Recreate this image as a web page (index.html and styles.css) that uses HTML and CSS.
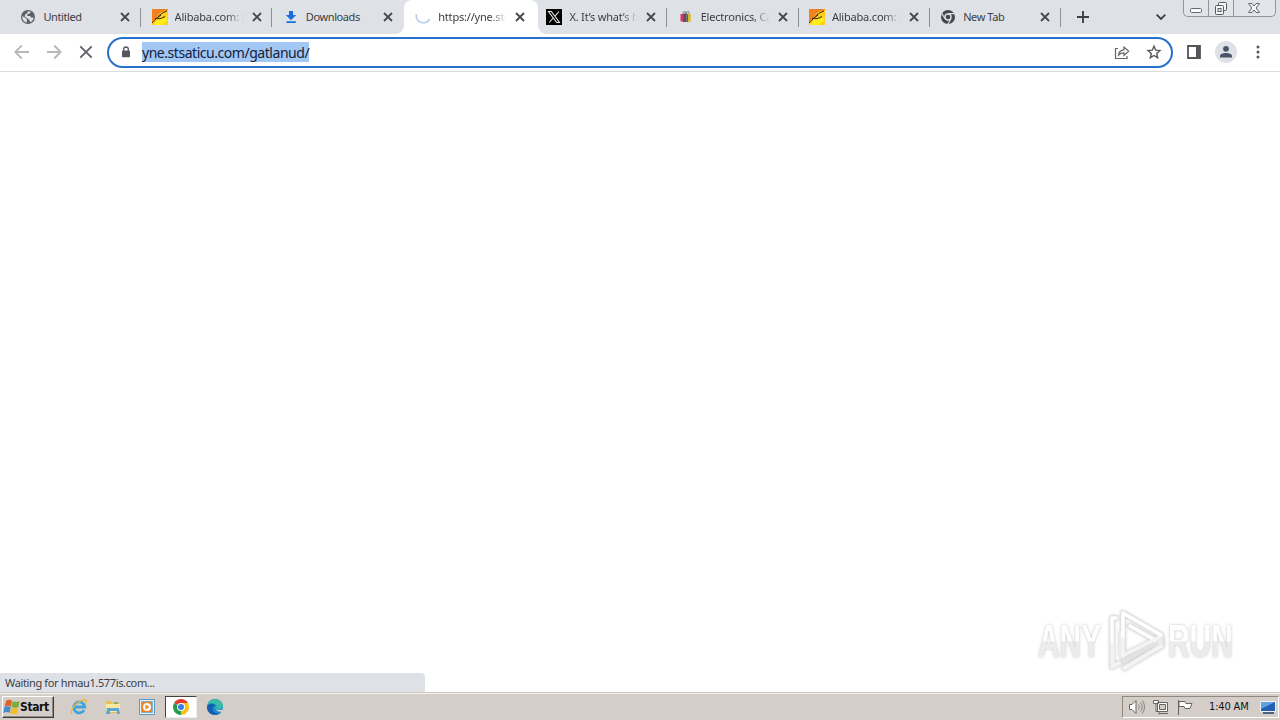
FILE: index.html
```html
<!DOCTYPE html>
<html lang="en">
<head>
<meta charset="utf-8">
<title>Browser</title>
<link rel="stylesheet" href="styles.css">
</head>
<body>
<svg class="defs" width="0" height="0">
  <symbol id="close" viewBox="0 0 10 10"><path d="M1 1l8 8M9 1L1 9" stroke="#45494d" stroke-width="1.8" fill="none"/></symbol>
  <symbol id="alibaba" viewBox="0 0 16 16"><path fill="#ffcf1c" d="M0 0h16v16H0z"/><path fill="#f58220" d="M0 0h16v1C10 2 7 4 4 9L0 14z"/><path fill="#ffee18" d="M4 12l4-2 7-1v3l-6 4H2z"/><path d="M0 14C4 11 6 5 15 2M3 9.500q3-.5 4 .3 2 0 6-2.300M5 9l4-3" fill="none" stroke="#35240b" stroke-width="1"/></symbol>
</svg>
<div class="desktop">
  <header class="tabstrip">
    <div class="tabs">
      <div class="tab"><svg class="fav" viewBox="0 0 16 16"><circle cx="8" cy="8" r="7" fill="#5c6066"/><path fill="#dee1e6" d="M2.300 7l3.200 2 1.300 1v3.700C4 13 2 10.500 2.300 7zM8 2.200l2.800.6-.7 1.500-2.400.8L7 7l3 .1 1.500 1.600 2.200-.2c-.2 2-1.600 4-3.200 4.700L9.300 11 7 9 4.800 7.800 5 5.500 7 4.600z"/></svg><span class="title">Untitled</span><svg class="x"><use href="#close"/></svg></div>
      <div class="tab"><svg class="fav"><use href="#alibaba"/></svg><span class="title fade">Alibaba.com: M</span><svg class="x"><use href="#close"/></svg></div>
      <div class="tab before"><svg class="fav" viewBox="0 0 16 16"><path fill="#1a6fe0" d="M6 2h4v4h3.200L8 11.200 2.800 6H6zM3.500 12.200h9.300V14H3.500z"/></svg><span class="title">Downloads</span><svg class="x"><use href="#close"/></svg></div>
      <div class="tab active"><svg class="fav" viewBox="0 0 16 16"><path d="M1.500 5.200A7 7 0 0 0 14.500 10" fill="none" stroke="#bccdef" stroke-width="1.8"/></svg><span class="title fade">https://yne.sts</span><svg class="x"><use href="#close"/></svg></div>
      <div class="tab"><svg class="fav" viewBox="0 0 16 16"><path d="M0 0h16v16H0z"/><path d="M2.500 2.500h2.800l8.200 11h-2.800zM13 2.500L8.800 7.300M7.200 9l-4 4.500" stroke="#e5e5e5" stroke-width="1.100" fill="none"/></svg><span class="title fade">X. It’s what’s h</span><svg class="x"><use href="#close"/></svg></div>
      <div class="tab"><svg class="fav" viewBox="0 0 16 16"><path d="M5 5V2.800h2.500V5M8.500 5V2.800H11V5" fill="none" stroke="#77777c" stroke-width=".8"/><path fill="#d5365e" d="M2.500 5h3.500v8l-3.500-.7z"/><path fill="#63417c" d="M5.500 4.500h3V13h-3z"/><path fill="#55711f" d="M8.500 5H10v8H8.500z"/><path fill="#d4bd2f" d="M10 5h2.800v7.500L10 13z"/></svg><span class="title fade">Electronics, Ca</span><svg class="x"><use href="#close"/></svg></div>
      <div class="tab"><svg class="fav"><use href="#alibaba"/></svg><span class="title fade">Alibaba.com: M</span><svg class="x"><use href="#close"/></svg></div>
      <div class="tab"><svg class="fav" viewBox="0 0 16 16"><circle cx="8" cy="8" r="7" fill="#44474c"/><circle cx="8" cy="8" r="3" fill="#44474c" stroke="#dee1e6" stroke-width="1.400"/><path d="M8 4.600h6.600M5 9.800L1.800 4.200M11 9.800l-3.300 5.600" stroke="#dee1e6" stroke-width="1.100"/></svg><span class="title">New Tab</span><svg class="x"><use href="#close"/></svg></div>
    </div>
    <svg class="plus" viewBox="0 0 12 12"><path d="M6 0v12M0 6h12" stroke="#3c4043" stroke-width="1.900"/></svg>
    <svg class="chev" viewBox="0 0 10 6"><path d="M.7.7L5 5 9.300.7" fill="none" stroke="#3c4043" stroke-width="1.800"/></svg>
    <div class="winbtns">
      <div class="wb"><svg viewBox="0 0 26 17"><rect x="7.500" y="8.500" width="11" height="4" rx="1" fill="#fafafa" stroke="#666a70"/></svg></div>
      <div class="wb"><svg viewBox="0 0 26 17"><g fill="#f7f7f7" stroke="#555a60"><rect x="10.500" y="2.500" width="8" height="8" rx="1"/><rect x="7.500" y="5.500" width="8" height="9" rx="1"/><rect x="10" y="8.500" width="3" height="3"/></g></svg></div>
      <div class="wb last"><svg viewBox="0 0 42 17"><path d="M15.500 3.500h3.500l2 2.500 2-2.500h3.500L23.200 8l3.300 4.500H23L21 10l-2 2.500h-3.500L18.800 8z" fill="#f7f7f7" stroke="#666a70"/></svg></div>
    </div>
  </header>
  <div class="toolbar">
    <svg class="nav" viewBox="0 0 96 32"><g fill="none" stroke-width="1.800"><path d="M22 16H8.500M14.800 9.500L8.300 16l6.500 6.500M40 16h13.500M47.200 9.500l6.500 6.500-6.500 6.500" stroke="#b6b8ba"/><path d="M73.300 10.300l11.400 11.400M84.700 10.300L73.300 21.700" stroke="#5c6064"/></g></svg>
    <div class="omnibox">
      <svg class="lock" viewBox="0 0 10 12"><path d="M2.700 5V3.300a2.300 2.300 0 0 1 4.600 0V5" fill="none" stroke="#54585d" stroke-width="1.300"/><rect x="1" y="4.500" width="8" height="6.800" rx=".8" fill="#54585d"/></svg>
      <span class="url">yne.stsaticu.com/gatlanud/</span>
      <svg class="share" viewBox="0 0 16 16"><path d="M4 4.500H1.500v10h11.500V12M4.500 11c.5-3.500 2-5 5.500-5.200V3l4.700 4.300L10 11.500V8.800c-2.700 0-4 .5-5.500 2.200z" fill="none" stroke="#63676b" stroke-width="1.200"/></svg>
      <svg class="star" viewBox="0 0 16 16"><path d="M8 2.200l1.700 4 4.300.4-3.300 2.900 1 4.200L8 11.500l-3.700 2.200 1-4.200L2 6.600l4.300-.4z" fill="none" stroke="#54585d" stroke-width="1.400"/></svg>
    </div>
    <svg class="panel" viewBox="0 0 14 14"><path d="M1 1h12v12H1z" fill="#fff" stroke="#53575c" stroke-width="1.800"/><path d="M9 1h4v12H9z" fill="#53575c"/></svg>
    <svg class="avatar" viewBox="0 0 22 22"><circle cx="11" cy="11" r="11" fill="#dee1e6"/><circle cx="11" cy="7.800" r="2.900" fill="#4a5367"/><path d="M5 16.500v-1.300c0-2 3-3.200 6-3.200s6 1.200 6 3.200v1.300z" fill="#4a5367"/></svg>
    <svg class="dots" viewBox="0 0 4 14"><g fill="#54585d"><circle cx="2" cy="2" r="1.500"/><circle cx="2" cy="7" r="1.500"/><circle cx="2" cy="12" r="1.500"/></g></svg>
  </div>
  <main class="page">
    <div class="status"><span>Waiting for hmau1.577is.com...</span></div>
    <div class="watermark">
      <span class="word">ANY</span>
      <svg viewBox="0 0 60 66"><g fill="none" stroke-linejoin="round" stroke-linecap="round"><path d="M17 5v43M17 5l38 22M10 10H6v49l7-4M18 60l38-22v-7M18 53l35-20M24 18l25 14" stroke="#e2e2e2" stroke-width="5"/><path d="M15 25v23l39-19v9L18 61M7 36v23l6-4" stroke="#ececec" stroke-width="4"/><path d="M17 30V5l38 22M24 18l25 14M10 10H6v25" stroke="#fff" stroke-width="3.500"/><path d="M17 30v18l36-19M6 35v24l7-4M18 60l38-22" stroke="#f4f4f4" stroke-width="3"/></g></svg>
      <span class="word">RUN</span>
    </div>
  </main>
  <footer class="taskbar">
    <div class="start"><svg viewBox="0 0 16 16"><path fill="#df6228" d="M3 2.500q3-1.500 5.500 0L7.500 8Q4.500 6.500 1.500 8z"/><path fill="#78ad3c" d="M9 3q3 1.500 6.500 0l-1 5.500q-3 1.300-6.500 0z"/><path fill="#438ccb" d="M1.300 8.500q2.500-1.500 6 0l-1 5.500q-2.500-1.500-6 0z"/><path fill="#f2bd29" d="M7.800 9q3 1.300 6.500 0l-1 5.500q-3 1.300-6.500 0z"/></svg><b>Start</b></div>
    <div class="quick">
      <div class="q"><svg viewBox="0 0 18 18"><path d="M14 12.200A5.500 5.500 0 1 1 14.700 9H5" fill="none" stroke="#3da4df" stroke-width="2.800"/><path d="M2 16C-.5 13 5 5 12 2.300c4-1.500 5 .2 4 2.700" fill="none" stroke="#e8b93c" stroke-width="1.300"/></svg></div>
      <div class="q"><svg viewBox="0 0 18 18"><path fill="#e7bf58" d="M2 3h5l1 2h7v10H2z"/><path fill="#fae9a4" d="M2 6h14v8H2z"/><path fill="#5ba7d4" d="M3 10h12l1 6h-3v-3H6v3H2z"/><path fill="#83b955" d="M10 4h4v2h-4z"/></svg></div>
      <div class="q"><svg viewBox="0 0 18 18"><path fill="#e8f0f5" stroke="#5c99c3" d="M1.500 1.500h15v15h-15z"/><path fill="#ee8220" stroke="#81aecb" d="M3.500 3.500h11v11h-11z"/><circle cx="9" cy="9" r="4" fill="#fff"/><path fill="#ee8220" d="M7.500 6.500l4 2.500-4 2.500z"/></svg></div>
      <div class="q pressed"><svg viewBox="0 0 18 18"><path d="M9 9L2.100 5A8 8 0 0 1 15.900 5z" fill="#e33b2e"/><path d="M9 9l6.900-4A8 8 0 0 1 9 17z" fill="#fbc116"/><path d="M9 9v8A8 8 0 0 1 2.100 5z" fill="#299a4b"/><path d="M9 5h6.900L12.500 11 9 17z" fill="#fbc116"/><circle cx="9" cy="9" r="4" fill="#fff"/><circle cx="9" cy="9" r="3" fill="#357de8"/></svg></div>
      <div class="q"><svg viewBox="0 0 18 18"><circle cx="9" cy="9" r="8" fill="#1688cf"/><path d="M1.500 7C3 0 13-1 16.500 6c1.500 4-2 6-5.500 5-2-.8 0-1.500-.5-3C9 4.500 4 4.500 1.500 7z" fill="#38bda5"/><path d="M1 9c2-4 7-4 8-1-4 1-3 6 1 7 2 .5 4 0 5-.5C10 19 1 17 1 9z" fill="#155eae"/><path d="M9.500 8.500c-1.500 2 1 4.500 7.500 3v2c-4 1-8-.5-7.500-5z" fill="#d5cfc8"/></svg></div>
    </div>
    <div class="tray">
      <svg class="trayicons" viewBox="0 0 72 18"><g fill="#fff" stroke="#66645f"><path d="M2.500 6.500H5l4-4v13l-4-4H2.500z"/><path d="M11.500 6.500q2 2.500 0 5M13.500 4.500q3.500 4.500 0 9M15.500 2.500q4 6.500 0 13" fill="none" stroke="#88867f"/><path d="M30.500 4.500h10v9h-10zM32 15.500h9M26.500 2.500v3h5v-3zM29 5.500v8h3v3"/><path fill="#d2cec7" d="M32.500 6.500h6v5h-6z"/><path d="M51.500 2v15M52 3.500h6l1 2h6l-2 5h-5l-1-2h-5z"/></g></svg>
      <span class="clock">1:40 AM</span>
      <svg class="desk" viewBox="0 0 16 16"><path fill="#2260b5" stroke="#eff2f4" d="M.5 2.500h15v10H.5z"/><path fill="#62a0df" d="M1 3h14L1 10z"/><path stroke="#1b3c67" stroke-width="1.500" d="M3 14h11"/></svg>
    </div>
  </footer>
</div>
</body>
</html>
```
FILE: styles.css
```css
* { box-sizing: border-box; }
body { margin: 0; font-family: "DejaVu Sans Condensed", "DejaVu Sans", sans-serif; font-stretch: condensed; overflow: hidden; }
svg { display: block; flex: none; }
.defs { position: absolute; }
.desktop { width: 1280px; height: 720px; display: flex; flex-direction: column; background: #fff; }
.tabstrip { height: 34px; background: #dee1e6; display: flex; flex: none; }
.tabs { display: flex; width: 1061px; padding-left: 10px; }
.tab { flex: 1 1 0; min-width: 0; display: flex; align-items: center; padding-left: 10.4px; position: relative; }
.tab::after { content: ""; position: absolute; right: 0; top: 8px; width: 1px; height: 19px; background: #8c9096; }
.before::after, .active::after { display: none; }
.active { background: #fff; border-radius: 8px 8px 0 0; box-shadow: 2px 0 #fff; padding-left: 11.6px; }
.active::before { content: ""; position: absolute; left: -8px; right: -10px; bottom: 0; height: 8px; background: radial-gradient(circle at 0 0, transparent 7.5px, #fff 8px) 0 0 / 8px 8px no-repeat, radial-gradient(circle at 100% 0, transparent 7.5px, #fff 8px) 100% 0 / 8px 8px no-repeat; }
.fav { width: 16px; height: 16px; }
.title { width: 69px; margin-left: 7px; font: 11px "Noto Sans", sans-serif; letter-spacing: -0.4px; line-height: 18px; color: #3c4043; white-space: nowrap; }
.fade { overflow: hidden; letter-spacing: -0.2px; -webkit-mask-image: linear-gradient(90deg, #000 75%, transparent 100%); mask-image: linear-gradient(90deg, #000 75%, transparent 100%); }
.x { width: 10px; height: 10px; margin-left: 8px; }
.plus { width: 12px; height: 12px; margin: 11px 0 0 16px; }
.chev { width: 10px; height: 6px; margin: 14px 0 0 67px; }
.winbtns { margin-left: 17px; width: 93px; height: 17px; display: flex; border: 1px solid #92969c; border-top: 0; border-radius: 0 0 5px 5px; background: #e2e4e9; }
.wb { width: 25px; border-right: 1px solid #92969c; overflow: hidden; }
.wb svg { width: 26px; height: 17px; margin-left: -1px; }
.last { width: 41px; border: 0; }
.last svg { width: 42px; }
.toolbar { height: 38px; flex: none; display: flex; align-items: center; border-bottom: 1px solid #dcdcdf; }
.toolbar > svg { margin-bottom: 1px; }
.nav { width: 96px; height: 32px; margin: 0 4px 0 7px; }
.omnibox { width: 1066px; height: 31px; border: 2px solid #2870cc; border-radius: 16px; display: flex; align-items: center; padding: 0 9px 1px 12px; }
.lock { width: 10px; height: 12px; margin-right: 11px; }
.url { font: 14px "Noto Sans", sans-serif; letter-spacing: -0.46px; line-height: 21px; height: 20px; width: 167px; background: #a3c7f5; color: #12223c; white-space: nowrap; }
.share { width: 16px; height: 16px; margin-left: auto; }
.star { width: 16px; height: 16px; margin-left: 16px; }
.panel { width: 14px; height: 14px; margin-left: 14px; }
.avatar { width: 22px; height: 22px; margin-left: 14px; }
.dots { width: 4px; height: 14px; margin-left: 19px; }
.page { flex: 1; display: flex; align-items: flex-end; justify-content: space-between; }
.status { width: 425px; height: 19px; background: #dee1e6; border-radius: 0 4px 0 0; padding-left: 5px; font: 11px "Noto Sans", sans-serif; letter-spacing: -0.36px; line-height: 20px; color: #3c4043; white-space: nowrap; }
.watermark { display: flex; align-items: center; margin: 0 47px 18px 0; height: 66px; width: 195px; justify-content: space-between; filter: drop-shadow(0 0 1.5px #c4c4c4) blur(.4px); }
.watermark svg { width: 60px; height: 66px; }
.word { font: 700 46px "Liberation Sans", sans-serif; line-height: 66px; color: transparent; background: linear-gradient(#fff 50%, #ececec 51%); -webkit-background-clip: text; background-clip: text; width: 98px; margin-right: -33px; white-space: nowrap; transform: scaleX(.65); transform-origin: left; }
.taskbar { height: 28px; flex: none; background: #d5cec8; border-top: 1px solid #c9c6b9; box-shadow: inset 0 1px #f5f3ef; display: flex; align-items: center; }
.start { width: 52px; height: 22px; margin-left: 2px; border: 1px solid; border-color: #fff #3e3c39 #3e3c39 #fff; box-shadow: inset -1px -1px #918b84; display: flex; align-items: center; font-size: 12px; color: #111; }
.start svg { width: 17px; height: 17px; }
.start b { letter-spacing: -0.4px; }
.quick { display: flex; gap: 2px; margin-left: 9px; }
.q { width: 32px; height: 22px; display: flex; align-items: center; justify-content: center; }
.q svg { width: 18px; height: 18px; }
.pressed { background: #fff; border: 1px solid; border-color: #46433f #eee #eee #46433f; }
.tray { width: 157px; height: 22px; margin-left: auto; margin-right: 1px; border: 1px solid; border-color: #8f8982 #fff #fff #8f8982; display: flex; align-items: center; }
.trayicons { width: 72px; height: 18px; margin-left: 4px; }
.clock { font-size: 11px; width: 41px; margin-left: 10px; margin-right: 1px; white-space: nowrap; letter-spacing: -0.15px; color: #111; }
.desk { width: 16px; height: 16px; margin-left: 9px; }
```
